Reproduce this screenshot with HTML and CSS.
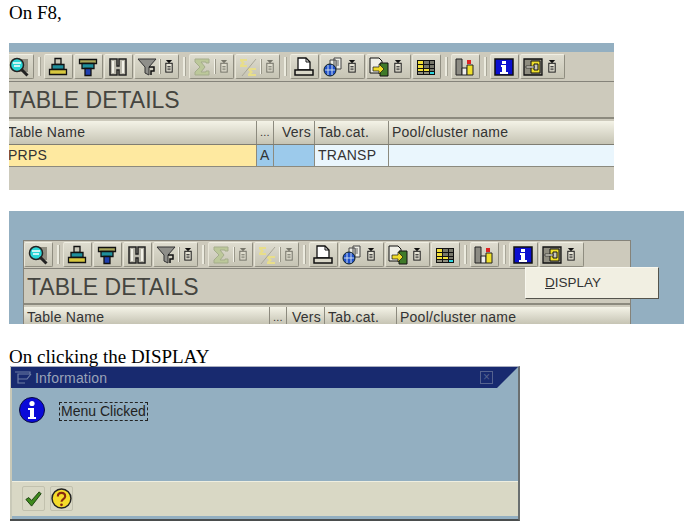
FILE: index.html
```html
<!DOCTYPE html>
<html lang="en">
<head>
  <meta charset="UTF-8">
  <meta name="viewport" content="width=device-width, initial-scale=1.0">
  <title>Table Details</title>
  <link rel="stylesheet" href="styles.css">
</head>
<body>
  <!-- Icons, reused by both toolbars -->
  <svg class="icon-defs" width="0" height="0" aria-hidden="true">
    <defs>
      <symbol id="i-find" viewBox="0 0 20 20">
        <rect x="6" y="2" width="13" height="13" fill="#8f8d80"/>
        <circle cx="8" cy="8" r="6.500" fill="#2bd6d6" stroke="#222" stroke-width="1.5"/>
        <path d="M4 6h8M5 9h6" stroke="#fff" stroke-width="1.5"/>
        <path d="M12 12l6.500 6.500" stroke="#222" stroke-width="3"/>
      </symbol>
      <symbol id="i-asc" viewBox="0 0 20 20">
        <path d="M7 1.500h6v6H7z" fill="#c9c7b8" stroke="#111" stroke-width="1.300"/>
        <path d="M4 7.500h12v5H4z" fill="#1f8f9c" stroke="#111" stroke-width="1.300"/>
        <path d="M1.500 12.500h17v5h-17z" fill="#d8c83e" stroke="#111" stroke-width="1.300"/>
      </symbol>
      <symbol id="i-desc" viewBox="0 0 20 20">
        <path d="M1.500 2.500h17v4h-17z" fill="#a8a65a" stroke="#111" stroke-width="1.300"/>
        <path d="M4 6.500h12v5H4z" fill="#1f8f9c" stroke="#111" stroke-width="1.300"/>
        <path d="M7 11.500h6v7H7z" fill="#1f3fb0" stroke="#111" stroke-width="1.300"/>
      </symbol>
      <symbol id="i-binoc" viewBox="0 0 20 20">
        <path d="M2 2h7v7h2V2h7v16h-7v-5H9v5H2z" fill="#b9b7ab" stroke="#222" stroke-width="1.500"/>
        <path d="M5 4v12M15 4v12" stroke="#f2f1e8" stroke-width="2"/>
      </symbol>
      <symbol id="i-filter" viewBox="0 0 20 20">
        <path d="M1 2h18l-7 8v8l-4-2v-6z" fill="#8f8f8a" stroke="#333"/>
        <path d="M12 10h5v4h-3v4" fill="none" stroke="#111" stroke-width="1.5"/>
      </symbol>
      <symbol id="i-drop" viewBox="0 0 10 16">
        <path d="M1 0h8L5 4z" fill="#111"/>
        <rect x="1" y="4" width="8" height="11" fill="#e5e3d5" stroke="#222" stroke-width="1.300"/>
        <path d="M3 8h4M3 10h4M3 12h4" stroke="#222"/>
      </symbol>
      <symbol id="i-drop-off" viewBox="0 0 10 16">
        <path d="M1 0h8L5 4z" fill="#77766b"/>
        <rect x="1" y="4" width="8" height="11" fill="#dedccd" stroke="#77766b" stroke-width="1.300"/>
        <path d="M3 8h4M3 10h4M3 12h4" stroke="#77766b"/>
      </symbol>
      <symbol id="i-sum" viewBox="0 0 20 20">
        <path d="M3 2h14v4h-3V5H9l4 5-4 5h5v-1h3v4H3v-3l5-5-5-5z" fill="#bcc89a" stroke="#a5ad8c"/>
      </symbol>
      <symbol id="i-sub" viewBox="0 0 20 20">
        <path d="M2 2h7v2H5l2 2-2 2h4v2H2V8l2-2-2-2z" fill="#e8de8a"/>
        <path d="M10 11h8v2h-5l2 2-2 2h5v2h-8v-2l2-2-2-2z" fill="#e8de8a"/>
        <path d="M4 19L18 2" stroke="#a8a697"/>
      </symbol>
      <symbol id="i-print" viewBox="0 0 20 20">
        <path d="M4 1h8l4 4v8H4z" fill="#fff" stroke="#111" stroke-width="1.300"/>
        <path d="M12 1v4h4" fill="none" stroke="#111"/>
        <path d="M1 13h18v5H1z" fill="#d9d7c8" stroke="#111" stroke-width="1.500"/>
      </symbol>
      <symbol id="i-send" viewBox="0 0 20 20">
        <path d="M7 3h6v9H7zM11 1h7v11h-7z" fill="#eeeee6" stroke="#444"/>
        <path d="M13 4h3M13 6h3M13 8h3" stroke="#666"/>
        <circle cx="7" cy="13" r="6" fill="#1f4fc8" stroke="#122"/>
        <path d="M5 8v10M9 8v10M2 13h10" stroke="#cde" stroke-width="1"/>
      </symbol>
      <symbol id="i-export" viewBox="0 0 20 20">
        <path d="M1 1h9l3 3v12H1z" fill="#eeeee6" stroke="#111"/>
        <path d="M11 6h8v13h-8z" fill="#3f7a2a" stroke="#111"/>
        <path d="M4 10h6V7l5 5-5 5v-3H4z" fill="#f0dc2a" stroke="#111" stroke-width=".7"/>
      </symbol>
      <symbol id="i-grid" viewBox="0 0 20 20">
        <path d="M1 3h18v15H1z" fill="#111"/>
        <path d="M2 4h5v3H2zM2 8h5v3H2z" fill="#f2e03a"/>
        <path d="M8 4h5v3H8zM14 4h4v3h-4zM8 8h5v3H8zM14 8h4v3h-4z" fill="#77776a"/>
        <path d="M2 12h5v2H2zM8 12h5v2H8z" fill="#f2e03a"/>
        <path d="M2 15h5v2H2zM8 15h5v2H8z" fill="#8f8d7d"/>
        <path d="M14 12h4v2h-4z" fill="#77776a"/>
        <path d="M14 15h4v2h-4z" fill="#2fd6e0"/>
      </symbol>
      <symbol id="i-chart" viewBox="0 0 20 20">
        <path d="M1 2h6v16H1z" fill="#8d8c84" stroke="#222"/>
        <path d="M7 11h5v7H7z" fill="#eee" stroke="#222"/>
        <path d="M12 8h6v10h-6z" fill="#efe02c" stroke="#222"/>
        <path d="M12 3h4v4h-4z" fill="#d22" />
      </symbol>
      <symbol id="i-info" viewBox="0 0 20 20">
        <path d="M1 2h18v16H1z" fill="#0b0fd0" stroke="#111" stroke-width="1.500"/>
        <path d="M8 4h4v3H8zM7 8h5v7h2v2H6v-2h2v-5H7z" fill="#fff"/>
      </symbol>
      <symbol id="i-layout" viewBox="0 0 20 20">
        <path d="M1 2h18v16H1z" fill="#8f8d80" stroke="#111" stroke-width="1.300"/>
        <path d="M8 4h9v12H8z" fill="#efe02c" stroke="#111"/>
        <path d="M11 7h4v6h-4z" fill="#c9c7b8" stroke="#111"/>
        <path d="M3 9h8v2H3z" fill="#e4e2d4" stroke="#111" stroke-width=".6"/>
      </symbol>
    </defs>
  </svg>

  <p class="note note-first">On F8,</p>

  <!-- First shot: window cropped on the left -->
  <div class="shot shot-cropped">
    <div class="sap-window">
      <div class="toolbar">
        <button class="tb"><svg class="ico"><use href="#i-find"/></svg></button>
        <span class="sep"></span>
        <button class="tb"><svg class="ico"><use href="#i-asc"/></svg></button>
        <button class="tb"><svg class="ico"><use href="#i-desc"/></svg></button>
        <button class="tb"><svg class="ico"><use href="#i-binoc"/></svg></button>
        <button class="tb tb-wide"><svg class="ico"><use href="#i-filter"/></svg><i class="bar"></i><svg class="drop"><use href="#i-drop"/></svg></button>
        <span class="sep"></span>
        <button class="tb tb-wide"><svg class="ico"><use href="#i-sum"/></svg><i class="bar"></i><svg class="drop"><use href="#i-drop-off"/></svg></button>
        <button class="tb tb-wide"><svg class="ico"><use href="#i-sub"/></svg><i class="bar"></i><svg class="drop"><use href="#i-drop-off"/></svg></button>
        <span class="sep"></span>
        <button class="tb"><svg class="ico"><use href="#i-print"/></svg></button>
        <button class="tb tb-wide"><svg class="ico"><use href="#i-send"/></svg><svg class="drop"><use href="#i-drop"/></svg></button>
        <button class="tb tb-wide"><svg class="ico"><use href="#i-export"/></svg><svg class="drop"><use href="#i-drop"/></svg></button>
        <button class="tb"><svg class="ico"><use href="#i-grid"/></svg></button>
        <span class="sep"></span>
        <button class="tb"><svg class="ico"><use href="#i-chart"/></svg></button>
        <span class="sep"></span>
        <button class="tb"><svg class="ico"><use href="#i-info"/></svg></button>
        <button class="tb tb-wide"><svg class="ico"><use href="#i-layout"/></svg><svg class="drop"><use href="#i-drop"/></svg></button>
      </div>
      <h1 class="win-title">TABLE DETAILS</h1>
      <div class="grid grid-head">
        <div>Table Name</div>
        <div class="col-more">...</div>
        <div class="col-vers">Vers</div>
        <div>Tab.cat.</div>
        <div>Pool/cluster name</div>
      </div>
      <div class="grid grid-row">
        <div class="cell-key">PRPS</div>
        <div class="cell-blue">A</div>
        <div class="cell-blue"></div>
        <div class="cell-pale">TRANSP</div>
        <div class="cell-pale"></div>
      </div>
    </div>
  </div>

  <!-- Second shot: same window with the menu open -->
  <div class="shot shot-menu">
    <div class="sap-window">
      <div class="toolbar">
        <button class="tb"><svg class="ico"><use href="#i-find"/></svg></button>
        <span class="sep"></span>
        <button class="tb"><svg class="ico"><use href="#i-asc"/></svg></button>
        <button class="tb"><svg class="ico"><use href="#i-desc"/></svg></button>
        <button class="tb"><svg class="ico"><use href="#i-binoc"/></svg></button>
        <button class="tb tb-wide"><svg class="ico"><use href="#i-filter"/></svg><i class="bar"></i><svg class="drop"><use href="#i-drop"/></svg></button>
        <span class="sep"></span>
        <button class="tb tb-wide"><svg class="ico"><use href="#i-sum"/></svg><i class="bar"></i><svg class="drop"><use href="#i-drop-off"/></svg></button>
        <button class="tb tb-wide"><svg class="ico"><use href="#i-sub"/></svg><i class="bar"></i><svg class="drop"><use href="#i-drop-off"/></svg></button>
        <span class="sep"></span>
        <button class="tb"><svg class="ico"><use href="#i-print"/></svg></button>
        <button class="tb tb-wide"><svg class="ico"><use href="#i-send"/></svg><svg class="drop"><use href="#i-drop"/></svg></button>
        <button class="tb tb-wide"><svg class="ico"><use href="#i-export"/></svg><svg class="drop"><use href="#i-drop"/></svg></button>
        <button class="tb"><svg class="ico"><use href="#i-grid"/></svg></button>
        <span class="sep"></span>
        <button class="tb"><svg class="ico"><use href="#i-chart"/></svg></button>
        <span class="sep"></span>
        <button class="tb"><svg class="ico"><use href="#i-info"/></svg></button>
        <button class="tb tb-wide"><svg class="ico"><use href="#i-layout"/></svg><svg class="drop"><use href="#i-drop"/></svg></button>
      </div>
      <h1 class="win-title">TABLE DETAILS</h1>
      <div class="grid grid-head">
        <div>Table Name</div>
        <div class="col-more">...</div>
        <div class="col-vers">Vers</div>
        <div>Tab.cat.</div>
        <div>Pool/cluster name</div>
      </div>
    </div>
    <div class="popup-menu"><u>D</u>ISPLAY</div>
  </div>

  <p class="note note-second">On clicking the DISPLAY</p>

  <!-- Information dialog -->
  <div class="dialog">
    <div class="dialog-title">
      <svg class="title-ico" viewBox="0 0 18 14">
        <path d="M1 1h15v2H4v9h7M4 8h9l4-5" fill="none" stroke="#6f7ea6" stroke-width="1.2"/>
      </svg>
      <span>Information</span>
      <span class="dialog-close">×</span>
    </div>
    <div class="dialog-body">
      <svg class="info-round" viewBox="0 0 26 26">
        <circle cx="13" cy="13" r="12.5" fill="#0a0ad8" stroke="#0a0a40"/>
        <circle cx="13" cy="6.5" r="2.6" fill="#fff"/>
        <path d="M9 11h6v9h2v2H9v-2h2v-7H9z" fill="#fff"/>
      </svg>
      <span class="msg">Menu Clicked</span>
    </div>
    <div class="dialog-foot">
      <button class="foot-btn">
        <svg viewBox="0 0 20 20" width="19" height="19"><path d="M2 11l3-2 3 3 8-9 2 2-10 13z" fill="#3f8a1e" stroke="#173d0c"/></svg>
      </button>
      <button class="foot-btn">
        <svg viewBox="0 0 20 20" width="21" height="21">
          <circle cx="10" cy="10" r="9" fill="#f5dc2a" stroke="#222" stroke-width="1.4"/>
          <path d="M6.5 8c0-4.500 7-4.500 7 0 0 2.500-3.500 2.500-3.500 5" fill="none" stroke="#8a2a10" stroke-width="2"/>
          <circle cx="10" cy="16" r="1.300" fill="#8a2a10"/>
        </svg>
      </button>
    </div>
  </div>
</body>
</html>
```

FILE: styles.css
```css
* {
  box-sizing: border-box;
}

body {
  margin: 0;
  padding: 4px 0 0 9px;
  background-color: #ffffff;
  font-family: "Liberation Serif", serif;
  color: #000000;
}

.icon-defs {
  position: absolute;
}

.note {
  margin: 0;
  font-size: 19px;
  line-height: 18px;
}

.note-first {
  margin-bottom: 21px;
}

.note-second {
  margin-top: 24px;
}

/* Screenshots */
.shot {
  overflow: hidden;
  background-color: #93afc1;
  font-family: "Liberation Sans", sans-serif;
}

.shot-cropped {
  width: 605px;
  height: 147px;
  padding-top: 9px;
}

.shot-cropped .sap-window {
  width: 620px;
  height: 138px;
  margin-left: -4px;
  border: 0;
  background-color: #cdcabc;
}

.shot-cropped .win-title {
  height: 37px;
}

.shot-menu {
  position: relative;
  width: 675px;
  height: 113px;
  margin-top: 21px;
  padding: 29px 0 0 14px;
}

.shot-menu .sap-window {
  width: 608px;
  height: 84px;
  border: 1px solid #85837a;
  border-bottom: 0;
}

.shot-menu .toolbar {
  height: 28px;
}

.sap-window {
  overflow: hidden;
  background-color: #cdcabc;
}

/* Toolbar */
.toolbar {
  display: flex;
  align-items: center;
  gap: 1px;
  height: 30px;
  border-bottom: 1px solid #85837a;
}

.tb {
  display: flex;
  align-items: center;
  gap: 2px;
  flex: none;
  width: 29px;
  height: 25px;
  padding: 0 0 0 3px;
  border: 1px solid #8f8d80;
  border-top-color: #f0efe4;
  border-left-color: #e8e6d8;
  border-radius: 2px;
  background: linear-gradient(#dedccf, #c6c4b4);
}

.tb-wide {
  width: 45px;
  padding-left: 2px;
}

.ico {
  flex: none;
  width: 20px;
  height: 20px;
}

.drop {
  flex: none;
  width: 8px;
  height: 13px;
  margin-left: 3px;
}

.bar {
  flex: none;
  width: 1px;
  height: 15px;
  background-color: #f3f2e8;
  box-shadow: 1px 0 0 #9a988a;
}

.sep {
  flex: none;
  width: 2px;
  height: 19px;
  margin: 0 3px;
  background-color: #ecebdf;
  box-shadow: 1px 0 0 #a8a698;
}

/* Title */
.win-title {
  height: 36px;
  margin: 0;
  padding-left: 3px;
  border-bottom: 2px solid #8c8a7e;
  color: #454540;
  font-size: 23px;
  font-weight: 400;
  line-height: 36px;
  white-space: nowrap;
}

/* Table */
.grid {
  display: grid;
  column-gap: 1px;
  font-size: 14px;
  letter-spacing: 0.25px;
}

.shot-cropped .grid {
  grid-template-columns: 251px 16px 40px 73px 1fr;
}

.shot-menu .grid {
  grid-template-columns: 245px 16px 37px 71px 1fr;
}

.grid-head {
  height: 24px;
  margin-top: 2px;
  background-color: #8c8a7e;
  border-bottom: 1px solid #7f7d72;
}

.grid-head > div {
  padding-left: 3px;
  background: linear-gradient(#f4f3e7, #c6c4b4);
  color: #333333;
  line-height: 22px;
  white-space: nowrap;
}

.shot-menu .grid-head {
  height: 17px;
  border-bottom: 0;
}

.shot-menu .grid-head > div {
  padding-top: 3px;
  line-height: 14px;
}

.col-more {
  font-size: 11px;
}

.col-vers {
  text-align: right;
  padding-right: 3px;
}

.grid-row {
  height: 22px;
  background-color: #8c8a7e;
  border-bottom: 1px solid #8c8a7e;
}

.grid-row > div {
  padding-left: 3px;
  color: #333333;
  line-height: 21px;
}

.cell-key {
  background-color: #fee9a0;
}

.cell-blue {
  background-color: #9ccaeb;
}

.cell-pale {
  background-color: #eaf6fd;
}

/* Menu over the window */
.popup-menu {
  position: absolute;
  top: 56px;
  left: 516px;
  width: 134px;
  height: 32px;
  padding-left: 19px;
  border: 1px solid #f8f7ee;
  border-right-color: #55544c;
  border-bottom-color: #55544c;
  background-color: #f1efe2;
  color: #333333;
  font-size: 13.500px;
  line-height: 29px;
}

/* Dialog */
.dialog {
  display: flex;
  flex-direction: column;
  width: 510px;
  height: 155px;
  margin-left: 1px;
  padding-left: 2px;
  background-color: #93afc1;
  border-top: 1px solid #a9aebf;
  border-right: 2px solid #6a6f70;
  border-bottom: 2px solid #4a4d4d;
  box-shadow: inset 2px 0 0 #c9c9b8;
  font-family: "Liberation Sans", sans-serif;
}

.dialog-title {
  display: flex;
  align-items: center;
  gap: 3px;
  flex: none;
  height: 21px;
  margin-left: -1px;
  padding: 0 25px 0 3px;
  background-color: #182a6f;
  clip-path: polygon(0 0, 100% 0, calc(100% - 21px) 100%, 0 100%);
  color: #9aa3b8;
  font-size: 14px;
  letter-spacing: 0.2px;
}

.title-ico {
  width: 18px;
  height: 14px;
}

.dialog-close {
  display: block;
  width: 13px;
  height: 13px;
  margin-left: auto;
  border: 1px solid #55628f;
  color: #55628f;
  font-size: 12px;
  line-height: 11px;
  text-align: center;
}

.dialog-body {
  display: flex;
  align-items: flex-start;
  flex: 1;
  gap: 14px;
  padding: 9px 0 0 7px;
  border-bottom: 1px solid #eeeee0;
}

.info-round {
  flex: none;
  width: 26px;
  height: 26px;
}

.msg {
  margin-top: 5px;
  padding: 0 1px;
  border: 1px dashed #222222;
  color: #222222;
  font-size: 14px;
  line-height: 17px;
}

.dialog-foot {
  display: flex;
  align-items: flex-start;
  flex: none;
  gap: 5px;
  height: 37px;
  padding: 4px 0 0 10px;
  background-color: #d9d8c5;
  border-bottom: 3px solid #93afc1;
}

.foot-btn {
  display: flex;
  align-items: center;
  justify-content: center;
  width: 23px;
  height: 25px;
  padding: 0;
  border: 1px solid #c2c1ae;
  border-radius: 2px;
  background-color: #d9d8c5;
}
```
